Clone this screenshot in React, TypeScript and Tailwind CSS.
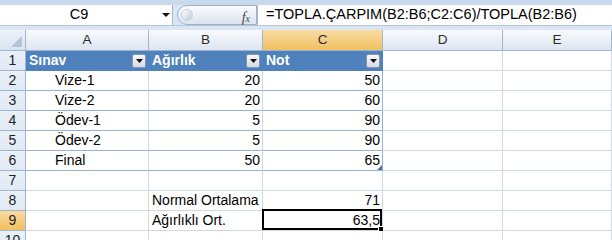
import React from 'react'

const FONT = { fontFamily: '"Liberation Sans", Arial, sans-serif' }

type Cell = { text?: string; align?: 'left' | 'right'; indent?: boolean }

const COLS = ['A', 'B', 'C', 'D', 'E']

// rows 2..6 are the table body
const bodyRows: [string, string, string][] = [
  ['Vize-1', '20', '50'],
  ['Vize-2', '20', '60'],
  ['Ödev-1', '5', '90'],
  ['Ödev-2', '5', '90'],
  ['Final', '50', '65'],
]

function FilterButton() {
  return (
    <div className="w-[14px] h-[14px] rounded-[2px] border border-[#8a97ab] bg-gradient-to-b from-[#f7f8fa] to-[#d5dbe5] flex items-center justify-center">
      <svg width="7" height="4" viewBox="0 0 7 4">
        <path d="M0 0h7L3.5 4z" fill="#111" />
      </svg>
    </div>
  )
}

function RowHeader({ n, active }: { n: number; active?: boolean }) {
  return (
    <div
      className={
        'h-[20px] border-r border-b border-[#9eb6ce] flex items-center justify-center text-[14px] text-[#222] ' +
        (active
          ? 'bg-gradient-to-b from-[#f9d99f] to-[#f1c15f]'
          : 'bg-gradient-to-b from-[#e9f0f8] to-[#e1e9f5]')
      }
    >
      {n}
    </div>
  )
}

function GridCell({ children, right, className = '' }: { children?: React.ReactNode; right?: boolean; className?: string }) {
  return (
    <div
      className={
        'relative h-[20px] border-r border-b border-[#d0d7e5] bg-white flex items-center text-[14px] text-black ' +
        (right ? 'justify-end pr-[2px] ' : 'pl-[3px] ') +
        className
      }
    >
      {children}
    </div>
  )
}

export default function App() {
  return (
    <div className="w-[612px] h-[240px] overflow-hidden bg-white" style={FONT}>
      {/* ribbon edge */}
      <div className="h-[5px] bg-[#c9d9ee]" />

      {/* formula bar */}
      <div className="h-[20px] flex bg-[#dbe6f4]">
        <div className="w-[173px] bg-white border-r border-[#a9b8cc] flex items-center relative">
          <span className="flex-1 text-center text-[14.5px] pr-[14px]">C9</span>
          <svg className="absolute left-[162px] top-[8px]" width="8" height="4" viewBox="0 0 8 4">
            <path d="M0 0h8L4 4z" fill="#111" />
          </svg>
        </div>
        <div className="w-[4px]" />
        <div className="w-[80px] h-[20px] rounded-l-full border border-[#9fb0c8] bg-gradient-to-b from-[#fbfcfe] to-[#dbe3ee] flex items-center relative">
          <div className="ml-[3px] w-[12px] h-[12px] rounded-full bg-gradient-to-br from-[#ffffff] to-[#c3ccd8] border border-[#c6cfdc]" />
          <span
            className="absolute right-[6px] top-[1px] text-[14px] italic text-[#444]"
            style={{ fontFamily: '"Liberation Serif", "Times New Roman", serif' }}
          >
            f<span className="text-[10px]">x</span>
          </span>
        </div>
        <div className="flex-1 bg-white border-l border-[#a9b8cc] flex items-center pl-[8px] text-[14.5px] text-black whitespace-nowrap">
          =TOPLA.ÇARPIM(B2:B6;C2:C6)/TOPLA(B2:B6)
        </div>
      </div>
      <div className="h-[5px] bg-[#dbe6f4] border-t border-[#b6c5d9]" />

      {/* sheet */}
      <div className="grid grid-cols-[26px_123px_114px_120px_120px_1fr]">
        {/* column headers */}
        <div className="h-[21px] border-r border-b border-[#9eb6ce] bg-gradient-to-b from-[#eef3fa] to-[#d9e3f0] relative">
          <svg className="absolute right-[3px] bottom-[3px]" width="11" height="11" viewBox="0 0 11 11">
            <path d="M11 0V11H0z" fill="#b4c4da" />
          </svg>
        </div>
        {COLS.map((c) => (
          <div
            key={c}
            className={
              'h-[21px] border-r border-b border-[#9eb6ce] flex items-center justify-center text-[13.5px] text-[#2b2b2b] ' +
              (c === 'C'
                ? 'bg-gradient-to-b from-[#f9dba3] to-[#f1c15f]'
                : 'bg-gradient-to-b from-[#f9fbfd] to-[#dde5f0]')
            }
          >
            {c}
          </div>
        ))}

        {/* row 1: table header */}
        <RowHeader n={1} />
        <div className="h-[20px] bg-[#4f81bd] border-r border-b border-[#4f81bd] flex items-center justify-between pl-[3px] pr-[2px] text-[14px] font-bold text-white">
          <span>Sınav</span>
          <FilterButton />
        </div>
        <div className="h-[20px] bg-[#4f81bd] border-r border-b border-[#4f81bd] flex items-center justify-between pl-[3px] pr-[2px] text-[14px] font-bold text-white">
          <span>Ağırlık</span>
          <FilterButton />
        </div>
        <div className="h-[20px] bg-[#4f81bd] border-r border-b border-[#4f81bd] flex items-center justify-between pl-[3px] pr-[2px] text-[14px] font-bold text-white">
          <span>Not</span>
          <FilterButton />
        </div>
        <GridCell />
        <GridCell />

        {/* rows 2..6 */}
        {bodyRows.map((r, i) => (
          <React.Fragment key={r[0]}>
            <RowHeader n={i + 2} />
            <GridCell className="!border-b-[#95b3d7] pl-[29px]">{r[0]}</GridCell>
            <GridCell right className="!border-b-[#95b3d7]">{r[1]}</GridCell>
            <GridCell right className="!border-b-[#95b3d7] !border-r-[#95b3d7]">
              {r[2]}
              {i === 4 && (
                <svg className="absolute right-[0px] bottom-[0px]" width="5" height="5" viewBox="0 0 5 5">
                  <path d="M5 0V5H0z" fill="#4f6fa8" />
                </svg>
              )}
            </GridCell>
            <GridCell />
            <GridCell />
          </React.Fragment>
        ))}

        {/* row 7 */}
        <RowHeader n={7} />
        <GridCell />
        <GridCell />
        <GridCell />
        <GridCell />
        <GridCell />

        {/* row 8 */}
        <RowHeader n={8} />
        <GridCell />
        <GridCell className="overflow-visible whitespace-nowrap">Normal Ortalama</GridCell>
        <GridCell right>71</GridCell>
        <GridCell />
        <GridCell />

        {/* row 9 */}
        <RowHeader n={9} active />
        <GridCell />
        <GridCell className="whitespace-nowrap">Ağırlıklı Ort.</GridCell>
        <GridCell right>
          63,5
          <div className="absolute -left-[1px] -top-[2px] right-0 bottom-0 border-2 border-black" />
          <div className="absolute -right-[3px] -bottom-[3px] w-[7px] h-[7px] bg-black border border-white" />
        </GridCell>
        <GridCell />
        <GridCell />

        {/* row 10 */}
        <RowHeader n={10} />
        <GridCell />
        <GridCell />
        <GridCell />
        <GridCell />
        <GridCell />
      </div>
    </div>
  )
}
